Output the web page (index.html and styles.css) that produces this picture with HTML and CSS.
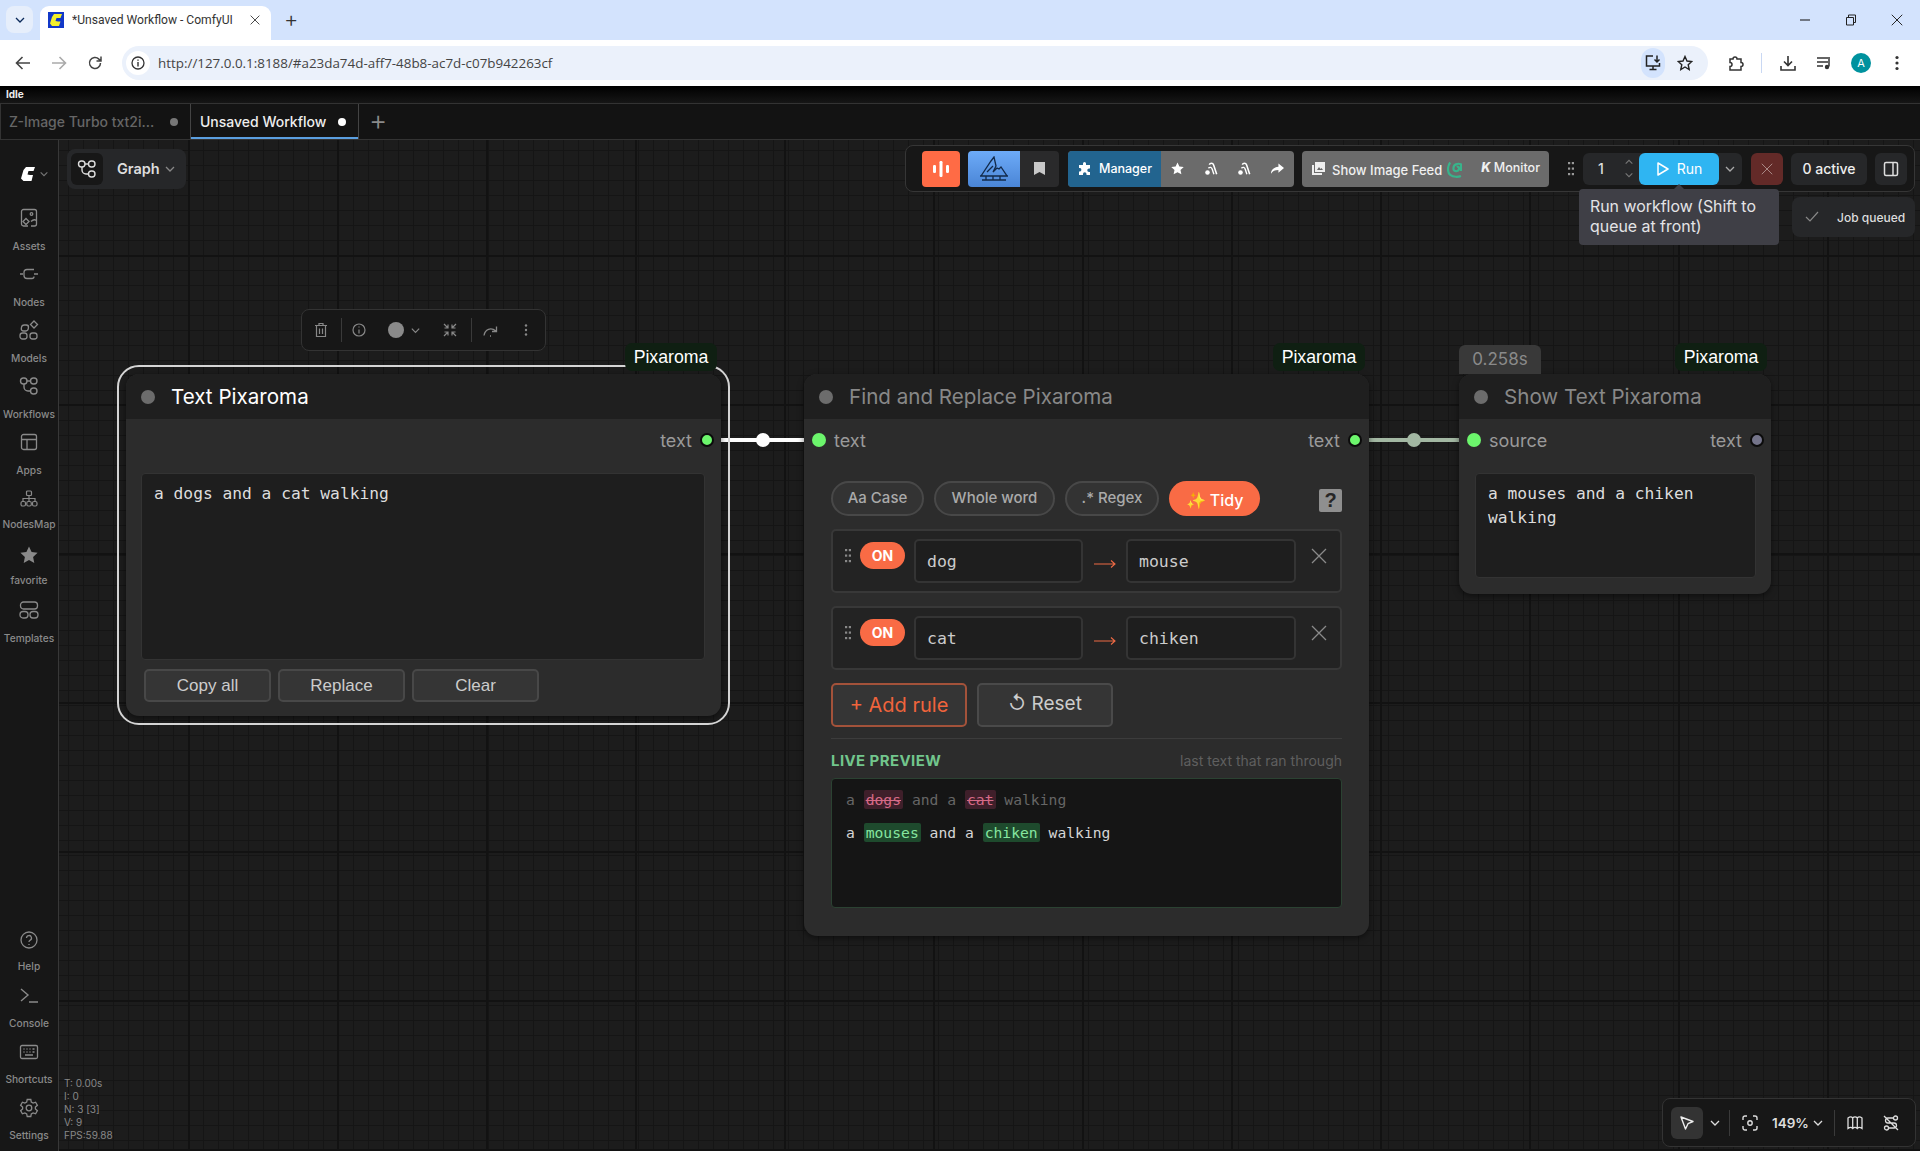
FILE: index.html
```html
<!DOCTYPE html>
<html lang="en">
<head>
  <meta charset="UTF-8">
  <title>*Unsaved Workflow - ComfyUI</title>
  <link rel="stylesheet" href="styles.css">
</head>
<body>

  <svg class="defs" width="0" height="0">
    <symbol id="chev" viewBox="0 0 12 12"><path d="M2 4l4 4 4-4" fill="none" stroke="currentColor" stroke-width="1.3"/></symbol>
    <symbol id="cross" viewBox="0 0 16 16"><path d="M1 1l14 14M15 1L1 15" fill="none" stroke="currentColor" stroke-width="1.3"/></symbol>
    <symbol id="grip" viewBox="0 0 6 14"><g fill="currentColor"><rect x="0" y="0" width="2.2" height="2.2"/><rect x="3.8" y="0" width="2.2" height="2.2"/><rect x="0" y="5.5" width="2.2" height="2.2"/><rect x="3.8" y="5.5" width="2.2" height="2.2"/><rect x="0" y="11" width="2.2" height="2.2"/><rect x="3.8" y="11" width="2.2" height="2.2"/></g></symbol>
    <symbol id="comfy" viewBox="0 0 16 16"><path d="M6 1h9l-1.5 4H8.5L7.5 8.5 10 9h3l-1.5 6H3.5L1 12.5 3.5 4z" fill="currentColor"/></symbol>
    <symbol id="flow" viewBox="0 0 20 20"><g fill="none" stroke="currentColor" stroke-width="1.4"><rect x="1.5" y="2" width="6.5" height="6" rx="3"/><rect x="11.5" y="2" width="6.5" height="6" rx="3"/><rect x="11.5" y="12" width="6.5" height="6" rx="3"/><path d="M5 8v3a4 4 0 0 0 4 4h2.500"/><path d="M8 5h3.500"/></g></symbol>
    <symbol id="vac" viewBox="0 0 16 16"><g fill="none" stroke="#fff"><path d="M6 3c1-2 4-2.500 5 .5l3.500 10.500" stroke-width="1.800"/><path d="M5 7c2-1.500 3.500-1 4.300 1l2 6" stroke-width="1.600"/></g><circle cx="4" cy="12" r="2.600" fill="#fff"/></symbol>
  </svg>

  <!-- Browser chrome -->
  <div class="tabstrip">
    <div class="tab-search"><svg width="12" height="12"><use href="#chev"/></svg></div>
    <div class="chrome-tab">
      <svg class="favicon" width="16" height="16" viewBox="0 0 16 16"><rect width="16" height="16" fill="#1238c8"/><path d="M6 2h8l-1.500 4H8.500L7.500 9 10 9.500h2.500L11 14H4L2 11.500 4 5z" fill="#f3f02c"/></svg>
      <span class="chrome-tab-title">*Unsaved Workflow - ComfyUI</span>
      <svg class="chrome-tab-close" width="10" height="10"><use href="#cross"/></svg>
    </div>
    <span class="new-tab">+</span>
    <div class="window-ctrls">
      <svg width="12" height="12" viewBox="0 0 12 12"><path d="M1 6h10" stroke="#222" stroke-width="1.100"/></svg>
      <svg width="12" height="12" viewBox="0 0 12 12"><path d="M1.500 3.500h7v7.500h-7zM3.500 3.500V1h7v7.500H8.500" fill="none" stroke="#222"/></svg>
      <svg width="12" height="12"><use href="#cross"/></svg>
    </div>
  </div>
  <div class="urlbar-row">
    <svg width="16" height="16" viewBox="0 0 16 16"><path d="M15 8H2M7.500 2L1.500 8l6 6" fill="none" stroke="#444" stroke-width="1.600"/></svg>
    <svg width="16" height="16" viewBox="0 0 16 16"><path d="M1 8h13M8.500 2l6 6-6 6" fill="none" stroke="#aaa" stroke-width="1.600"/></svg>
    <svg width="16" height="16" viewBox="0 0 16 16"><path d="M13.500 8a5.500 5.500 0 1 1-1.600-3.900L14 6M14 1.500V6H9.500" fill="none" stroke="#444" stroke-width="1.500"/></svg>
    <div class="address">
      <span class="address-info"><svg width="14" height="14" viewBox="0 0 14 14"><circle cx="7" cy="7" r="6" fill="none" stroke="#333" stroke-width="1.300"/><path d="M7 6v4.500M7 3.500v1.300" stroke="#333" stroke-width="1.400"/></svg></span>
      <span class="address-url">http://127.0.0.1:8188/#a23da74d-aff7-48b8-ac7d-c07b942263cf</span>
      <span class="address-install"><svg width="18" height="18" viewBox="0 0 18 18"><path d="M9 2H2.500v10h13V9M5.500 15.500h7M9 12v3.500M13 1.500v6M10.500 5.500l2.500 2.500 2.500-2.500" fill="none" stroke="#222" stroke-width="1.500"/></svg></span>
      <svg class="address-star" width="16" height="16" viewBox="0 0 16 16"><path d="M8 1.500l2 4.500 4.800.5-3.600 3.200 1 4.800L8 12l-4.200 2.500 1-4.800L1.200 6.500 6 6z" fill="none" stroke="#222" stroke-width="1.400"/></svg>
    </div>
    <div class="browser-actions">
      <svg width="17" height="17" viewBox="0 0 17 17"><path d="M3 4h3a2 2 0 0 1 4 0h4v3.500a2 2 0 0 1 0 4V15H3v-3.500a2 2 0 0 0 0-4z" fill="none" stroke="#333" stroke-width="1.500"/></svg>
      <span class="browser-sep"></span>
      <svg width="18" height="18" viewBox="0 0 18 18"><path d="M9 2v9M5 7.500l4 4 4-4M2 12v4h14v-4" fill="none" stroke="#333" stroke-width="1.600"/></svg>
      <svg class="media-icon" width="18" height="18" viewBox="0 0 18 18"><path d="M1 4h11M1 8h11M1 12h6" stroke="#333" stroke-width="1.500"/><path d="M13 3v9.500" stroke="#333" stroke-width="1.500"/><circle cx="11" cy="13" r="2.200" fill="#333"/></svg>
      <span class="avatar">A</span>
      <svg class="browser-menu" width="4" height="16" viewBox="0 0 4 16"><g fill="#333"><circle cx="2" cy="2.500" r="1.600"/><circle cx="2" cy="8" r="1.600"/><circle cx="2" cy="13.500" r="1.600"/></g></svg>
    </div>
  </div>

  <!-- ComfyUI top -->
  <div class="status-bar">Idle</div>
  <div class="wf-tabs">
    <div class="wf-tab"><span class="wf-tab-name">Z-Image Turbo txt2i...</span><span class="wf-dot"></span></div>
    <div class="wf-tab active"><span class="wf-tab-name">Unsaved Workflow</span><span class="wf-dot"></span></div>
    <span class="wf-add">+</span>
  </div>

  <div class="main">
    <!-- Sidebar -->
    <aside class="sidebar">
      <div class="logo-row">
        <svg width="16" height="16"><use href="#comfy"/></svg>
        <svg class="logo-chev" width="10" height="10"><use href="#chev"/></svg>
      </div>
      <div class="side-item">
        <svg width="20" height="20" viewBox="0 0 20 20"><g fill="none" stroke="currentColor" stroke-width="1.300"><path d="M9 18H4.500A2 2 0 0 1 2.500 16V3.500a2 2 0 0 1 2-2h11a2 2 0 0 1 2 2V16a2 2 0 0 1-2 2H12"/><circle cx="12.500" cy="6" r="1.300"/><path d="M7 10.500l3 3-3 3-3-3z"/><path d="M12 13.500c2-2 3.500-2.500 5.500-1"/></g></svg>
        <span>Assets</span>
      </div>
      <div class="side-item">
        <svg width="20" height="20" viewBox="0 0 20 20"><g fill="none" stroke="currentColor" stroke-width="1.300"><path d="M1 10h3M15 10h4"/><path d="M15 5.500H8a3 3 0 0 0-3 3v3a3 3 0 0 0 3 3h5a2 2 0 0 0 2-2"/></g></svg>
        <span>Nodes</span>
      </div>
      <div class="side-item">
        <svg width="20" height="20" viewBox="0 0 20 20"><g fill="none" stroke="currentColor" stroke-width="1.300"><rect x="1.500" y="5" width="7" height="6" rx="2.500" transform="skewX(-8) translate(2 0)"/><rect x="1" y="13" width="7" height="6" rx="2.500"/><rect x="11" y="13" width="7" height="6" rx="2.500"/><path d="M15 1l3.500 3.500L15 8l-3.500-3.500z"/></g></svg>
        <span>Models</span>
      </div>
      <div class="side-item">
        <svg width="20" height="20"><use href="#flow"/></svg>
        <span>Workflows</span>
      </div>
      <div class="side-item">
        <svg width="20" height="20" viewBox="0 0 20 20"><g fill="none" stroke="currentColor" stroke-width="1.300"><rect x="2.500" y="2.500" width="15" height="15" rx="2"/><path d="M2.500 7.500h15M8 7.500v10"/></g></svg>
        <span>Apps</span>
      </div>
      <div class="side-item tight">
        <svg width="20" height="20" viewBox="0 0 20 20"><g fill="none" stroke="currentColor" stroke-width="1.200"><rect x="7.500" y="2" width="5" height="4.500" rx="1"/><rect x="2" y="12.500" width="4.500" height="4.500" rx="1.500"/><rect x="7.800" y="12.500" width="4.500" height="4.500" rx="1.500"/><rect x="13.500" y="12.500" width="4.500" height="4.500" rx="1.500"/><path d="M10 6.500v6M4 12.500V9.500h12v3"/></g></svg>
        <span>NodesMap</span>
      </div>
      <div class="side-item tight">
        <svg width="20" height="20" viewBox="0 0 20 20"><path d="M10 1.500l2.600 5.600 6 .7-4.500 4.100 1.200 6L10 15l-5.300 2.900 1.200-6L1.400 7.800l6-.7z" fill="currentColor"/></svg>
        <span>favorite</span>
      </div>
      <div class="side-item">
        <svg width="20" height="20" viewBox="0 0 20 20"><g fill="none" stroke="currentColor" stroke-width="1.300"><rect x="1.500" y="2" width="17" height="7" rx="3"/><rect x="1" y="11.500" width="8" height="6.500" rx="3"/><rect x="11" y="11.500" width="8" height="6.500" rx="3"/></g></svg>
        <span>Templates</span>
      </div>

      <div class="side-bottom">
        <div class="side-item">
          <svg width="20" height="20" viewBox="0 0 20 20"><g fill="none" stroke="currentColor" stroke-width="1.300"><circle cx="10" cy="10" r="8"/><path d="M7.500 8a2.500 2.500 0 1 1 3.500 2.300c-.7.400-1 .8-1 1.700M10 14v1"/></g></svg>
          <span>Help</span>
        </div>
        <div class="side-item">
          <svg width="20" height="20" viewBox="0 0 20 20"><path d="M2 3l7 6-7 6M10 16h9" fill="none" stroke="currentColor" stroke-width="1.400"/></svg>
          <span>Console</span>
        </div>
        <div class="side-item">
          <svg width="20" height="20" viewBox="0 0 20 20"><g fill="none" stroke="currentColor" stroke-width="1.300"><rect x="1.500" y="3.500" width="17" height="13" rx="1.500"/><path d="M4.500 7h1M7.500 7h1M10.500 7h1M13.500 7h2M4.500 10h1M7.500 10h1M10.500 10h1M13.500 10h2M6 13h8"/></g></svg>
          <span>Shortcuts</span>
        </div>
        <div class="side-item">
          <svg width="20" height="20" viewBox="0 0 20 20"><g fill="none" stroke="currentColor" stroke-width="1.300"><path d="M8.200 1.500h3.600l.5 2.600 1.800 1 2.500-.9 1.800 3.100-2 1.700v2l2 1.700-1.800 3.100-2.500-.9-1.800 1-.5 2.600H8.200l-.5-2.600-1.800-1-2.500.9-1.800-3.100 2-1.700V9L1.600 7.300l1.800-3.100 2.500.9 1.800-1z"/><circle cx="10" cy="10" r="2.800"/></g></svg>
          <span>Settings</span>
        </div>
      </div>
    </aside>

    <!-- Canvas -->
    <div class="canvas">
      <svg class="links" width="1861" height="1011">
        <path d="M662 300h91" stroke="#fff" stroke-width="4"/>
        <circle cx="704" cy="300" r="7" fill="#fff"/>
        <path d="M1310 300h90" stroke="#a3b8a3" stroke-width="4"/>
        <circle cx="1355" cy="300" r="7" fill="#a3b8a3"/>
      </svg>

      <div class="graph-pill">
        <span class="graph-icon"><svg width="20" height="20"><use href="#flow"/></svg></span>
        <span class="graph-label">Graph</span>
        <svg width="12" height="12"><use href="#chev"/></svg>
      </div>

      <!-- Top action bar -->
      <div class="actionbar">
        <span class="tb-orange"><svg width="18" height="16" viewBox="0 0 18 16"><g fill="#fff"><rect x="1" y="4" width="3" height="8" rx="1.200"/><rect x="7.500" y="0" width="3" height="16" rx="1.200"/><rect x="14" y="4" width="3" height="8" rx="1.200"/></g></svg></span>
        <div class="tb-pair">
          <span class="tb-blue"><svg width="28" height="26" viewBox="0 0 28 26"><g fill="none" stroke="#122a4a" stroke-width="1.300"><path d="M1 20L11 5l3-4 2 9-3 6 4-4 2 1 2-2 6 9zM0 20h28M2 24h24M6 20v4M13 20v4M20 20v4M7 16l6-6"/></g></svg></span>
          <span class="tb-dark"><svg width="11" height="13" viewBox="0 0 11 13"><path d="M0 0h11v13L5.500 10 0 13z" fill="#c8c8c8"/></svg></span>
        </div>
        <div class="tb-manager">
          <span class="mgr-blue">
            <svg width="14" height="14" viewBox="0 0 14 14"><path d="M5 1.500a1.500 1.500 0 0 1 3 0V3h4v3.500h-1a1.700 1.700 0 0 0 0 3.500h1V13H8.500v-1a1.700 1.700 0 0 0-3.500 0v1H1V9.500h1a1.800 1.800 0 0 0 0-3.500H1V3h4z" fill="#fff"/></svg>
            Manager
          </span>
          <span class="mgr-icons">
            <svg width="13" height="13" viewBox="0 0 16 16"><path d="M8 .5l2.300 5 5.400.6-4 3.700 1.100 5.400L8 12.500l-4.800 2.700 1.100-5.400-4-3.700 5.400-.6z" fill="#fff"/></svg>
            <svg width="14" height="14"><use href="#vac"/></svg>
            <svg width="14" height="14"><use href="#vac"/></svg>
            <svg width="13" height="12" viewBox="0 0 14 12"><path d="M8 0l6 5-6 5V7C4 7 2 8 0 11c0-4 3-7 8-7.500z" fill="#fff"/></svg>
          </span>
        </div>
        <div class="tb-feed">
          <svg class="feed-icon" width="13" height="13" viewBox="0 0 13 13"><path d="M3 0h10v10H3zM0 3h2v8h8v2H0z" fill="#eee"/><path d="M5 8l2-3 1.500 2 1-1 1.500 2z" fill="#666"/></svg>
          <span class="feed-label">Show Image Feed</span>
          <svg class="feed-mantis" width="15" height="17" viewBox="0 0 14 15"><path d="M3 1C.5 4 0 10 3 12.500c3 2.500 8 2 10 1M13 2.500c-3-1-7 0-7 4 0 3 4 3.500 5 1 .8-2-1-3-2-2.500M13 2v7" fill="none" stroke="#38b48b" stroke-width="2"/></svg>
          <span class="feed-monitor"><b>K</b> Monitor</span>
        </div>
        <svg class="tb-grip" width="8" height="14"><use href="#grip"/></svg>
        <div class="run-group">
          <span class="run-count">1</span>
          <span class="run-steps">
            <svg width="10" height="10" viewBox="0 0 12 12"><path d="M2 8l4-4 4 4" fill="none" stroke="#777" stroke-width="1.300"/></svg>
            <svg width="10" height="10"><use href="#chev"/></svg>
          </span>
          <span class="run-btn">
            <svg width="14" height="16" viewBox="0 0 14 16"><path d="M2 2l10 6-10 6z" fill="none" stroke="#fff" stroke-width="1.500" stroke-linejoin="round"/></svg>
            Run
          </span>
          <svg class="run-chev" width="12" height="12"><use href="#chev"/></svg>
        </div>
        <span class="stop-btn"><svg width="12" height="12"><use href="#cross"/></svg></span>
        <span class="active-count">0 active</span>
        <span class="panel-btn"><svg width="16" height="16" viewBox="0 0 16 16"><g fill="none" stroke="#ddd" stroke-width="1.500"><rect x="1.500" y="1.500" width="13" height="13" rx="1.500"/><path d="M10 1.500v13"/></g></svg></span>
      </div>

      <div class="tooltip">Run workflow (Shift to queue at front)</div>
      <div class="toast">
        <svg width="14" height="12" viewBox="0 0 14 12"><path d="M1 6l4 4 8-9" fill="none" stroke="#888" stroke-width="1.200"/></svg>
        <span>Job queued</span>
      </div>

      <!-- Selection toolbox -->
      <div class="selection-box">
        <svg class="sb-trash" width="14" height="16" viewBox="0 0 14 16"><g fill="none" stroke="#888" stroke-width="1.200"><path d="M1 3.500h12M5 3.500V1.500h4v2M2.500 3.500v11h9v-11M5.500 6.500v5.500M8.500 6.500v5.500"/></g></svg>
        <span class="sb-sep"></span>
        <svg class="sb-info" width="14" height="14" viewBox="0 0 14 14"><g fill="none" stroke="#888" stroke-width="1.200"><circle cx="7" cy="7" r="6"/><path d="M7 6.500v4M7 3.500v1"/></g></svg>
        <span class="sb-color"></span>
        <svg class="sb-chev" width="11" height="11"><use href="#chev"/></svg>
        <svg class="sb-collapse" width="14" height="14" viewBox="0 0 14 14"><path d="M1 1l4 4M5 1.500V5H1.500M13 1L9 5M9 1.500V5h3.500M1 13l4-4M5 12.500V9H1.500M13 13L9 9M9 12.500V9h3.500" fill="none" stroke="#888" stroke-width="1.200"/></svg>
        <span class="sb-sep sb-sep2"></span>
        <svg class="sb-redo" width="15" height="13" viewBox="0 0 15 13"><path d="M1 11.500C2 5 8 3 13 7M13.500 2.500V7.500H9M7 12h1" fill="none" stroke="#888" stroke-width="1.300"/></svg>
        <svg class="sb-dots" width="4" height="12" viewBox="0 0 4 12"><g fill="#888"><circle cx="2" cy="1.500" r="1.200"/><circle cx="2" cy="6" r="1.200"/><circle cx="2" cy="10.500" r="1.200"/></g></svg>
      </div>

      <!-- Text node -->
      <div class="node node-text">
        <div class="node-outline"></div>
        <span class="node-badge">Pixaroma</span>
        <div class="node-title selected"><span class="title-dot"></span>Text Pixaroma</div>
        <div class="slots">
          <span class="slot-side"></span>
          <span class="slot-side"><span class="slot-label">text</span><span class="slot green"></span></span>
        </div>
        <div class="textarea textarea-big">a dogs and a cat walking</div>
        <div class="text-btns">
          <span class="text-btn">Copy all</span>
          <span class="text-btn">Replace</span>
          <span class="text-btn">Clear</span>
        </div>
      </div>

      <!-- Find and replace node -->
      <div class="node node-find">
        <span class="node-badge">Pixaroma</span>
        <div class="node-title"><span class="title-dot"></span>Find and Replace Pixaroma</div>
        <div class="slots">
          <span class="slot-side"><span class="slot green flat"></span><span class="slot-label">text</span></span>
          <span class="slot-side"><span class="slot-label">text</span><span class="slot green"></span></span>
        </div>
        <div class="find-body">
          <div class="chips">
            <span class="chip chip-case">Aa Case</span>
            <span class="chip chip-word">Whole word</span>
            <span class="chip chip-regex">.* Regex</span>
            <span class="chip chip-tidy">✨ Tidy</span>
            <span class="help-box">?</span>
          </div>

          <div class="rule">
            <svg class="rule-grip" width="6" height="14"><use href="#grip"/></svg>
            <span class="rule-on">ON</span>
            <span class="rule-input">dog</span>
            <span class="rule-arrow"><svg width="22" height="8" viewBox="0 0 22 8"><path d="M0 4h21M17 .5L21 4l-4 3.500" fill="none" stroke="#ee6a44" stroke-width="1.100"/></svg></span>
            <span class="rule-input">mouse</span>
            <span class="rule-x"><svg width="16" height="16"><use href="#cross"/></svg></span>
          </div>
          <div class="rule">
            <svg class="rule-grip" width="6" height="14"><use href="#grip"/></svg>
            <span class="rule-on">ON</span>
            <span class="rule-input">cat</span>
            <span class="rule-arrow"><svg width="22" height="8" viewBox="0 0 22 8"><path d="M0 4h21M17 .5L21 4l-4 3.500" fill="none" stroke="#ee6a44" stroke-width="1.100"/></svg></span>
            <span class="rule-input">chiken</span>
            <span class="rule-x"><svg width="16" height="16"><use href="#cross"/></svg></span>
          </div>

          <div class="rule-btns">
            <span class="rule-btn add">+ Add rule</span>
            <span class="rule-btn reset">↺ Reset</span>
          </div>
          <div class="find-divider"></div>
          <div class="preview-head">
            <span class="preview-title">LIVE PREVIEW</span>
            <span class="preview-note">last text that ran through</span>
          </div>
          <div class="preview">
            <div class="preview-line old">a <mark class="del">dogs</mark> and a <mark class="del">cat</mark> walking</div>
            <div class="preview-line new">a <mark class="ins">mouses</mark> and a <mark class="ins">chiken</mark> walking</div>
          </div>
        </div>
      </div>

      <!-- Show text node -->
      <div class="node node-show">
        <span class="node-time">0.258s</span>
        <span class="node-badge">Pixaroma</span>
        <div class="node-title"><span class="title-dot"></span>Show Text Pixaroma</div>
        <div class="slots">
          <span class="slot-side"><span class="slot green flat"></span><span class="slot-label">source</span></span>
          <span class="slot-side"><span class="slot-label">text</span><span class="slot grey"></span></span>
        </div>
        <div class="textarea textarea-small">a mouses and a chiken walking</div>
      </div>

      <!-- Stats -->
      <div class="stats">
        <div>T: 0.00s</div>
        <div>I: 0</div>
        <div>N: 3 [3]</div>
        <div>V: 9</div>
        <div>FPS:59.88</div>
      </div>

      <!-- Bottom canvas controls -->
      <div class="zoom-bar">
        <span class="zb-pointer"><svg width="16" height="16" viewBox="0 0 16 16"><path d="M2 2l12 4.500-5 2.200L6.500 14z" fill="none" stroke="#eee" stroke-width="1.400" stroke-linejoin="round"/></svg></span>
        <svg class="zb-chev" width="12" height="12"><use href="#chev"/></svg>
        <span class="zb-sep"></span>
        <svg class="zb-fit" width="16" height="16" viewBox="0 0 16 16"><g fill="none" stroke="#ddd" stroke-width="1.400"><path d="M1 5V3a2 2 0 0 1 2-2h2M11 1h2a2 2 0 0 1 2 2v2M15 11v2a2 2 0 0 1-2 2h-2M5 15H3a2 2 0 0 1-2-2v-2"/><circle cx="8" cy="8" r="2.200"/></g></svg>
        <span class="zb-pct">149%</span>
        <svg class="zb-chev2" width="12" height="12"><use href="#chev"/></svg>
        <span class="zb-sep zb-sep2"></span>
        <svg class="zb-map" width="16" height="16" viewBox="0 0 16 16"><path d="M1 3c2-1.500 3.500-1.500 4.700 0 1.400-1.500 3.200-1.500 4.600 0 1.200-1.500 2.700-1.500 4.700 0v10.500c-2-1.500-3.500-1.500-4.700 0-1.400-1.500-3.200-1.500-4.600 0-1.200-1.500-2.700-1.500-4.700 0zM5.700 3v10.500M10.300 3v10.500" fill="none" stroke="#ddd" stroke-width="1.300"/></svg>
        <svg class="zb-links" width="16" height="16" viewBox="0 0 16 16"><g fill="none" stroke="#ddd" stroke-width="1.300"><circle cx="12.500" cy="3" r="2"/><circle cx="3.500" cy="13" r="2"/><path d="M10.500 3H5a2.500 2.500 0 0 0 0 5h6a2.500 2.500 0 0 1 0 5H5.500M1 1l14 14"/></g></svg>
      </div>
    </div>
  </div>

</body>
</html>
```

FILE: styles.css
```css
* {
  box-sizing: border-box;
}

body {
  margin: 0;
  width: 1920px;
  height: 1151px;
  overflow: hidden;
  background-color: #1b1b1b;
  font-family: Inter, "Noto Sans", sans-serif;
}

.defs {
  position: absolute;
}

/* Browser chrome */
.tabstrip {
  height: 40px;
  background-color: #d3e3fd;
  display: flex;
  align-items: flex-end;
  position: relative;
}

.tab-search {
  width: 27px;
  height: 27px;
  margin: 0 7px 7px 6px;
  border-radius: 8px;
  background-color: #e6eefb;
  display: flex;
  align-items: center;
  justify-content: center;
  color: #0b2a5a;
}

.chrome-tab {
  width: 231px;
  height: 34px;
  background-color: #fff;
  border-radius: 9px 9px 0 0;
  display: flex;
  align-items: center;
  padding: 0 11px 6px 8px;
}

.chrome-tab-title {
  margin-left: 8px;
  font-family: Roboto, sans-serif;
  font-size: 12.100px;
  color: #333;
  flex: 1;
  white-space: nowrap;
  overflow: hidden;
}

.chrome-tab-close {
  color: #222;
}

.new-tab {
  margin-left: 13px;
  width: 16px;
  font-size: 22px;
  font-weight: 300;
  line-height: 38px;
  color: #333;
  align-self: stretch;
}

.window-ctrls {
  position: absolute;
  top: 14px;
  right: 17px;
  display: flex;
  gap: 34px;
  color: #222;
}

.urlbar-row {
  height: 46px;
  background-color: #fff;
  display: flex;
  align-items: center;
  padding-left: 15px;
  gap: 20px;
}

.address {
  margin-left: -1px;
  width: 1586px;
  height: 34px;
  border-radius: 17px;
  background-color: #ebf1fb;
  display: flex;
  align-items: center;
  padding-left: 4px;
}

.address-info {
  width: 24px;
  height: 24px;
  border-radius: 50%;
  background-color: #fff;
  display: flex;
  align-items: center;
  justify-content: center;
}

.address-url {
  margin-left: 8px;
  font-family: "Open Sans", sans-serif;
  font-size: 13.400px;
  color: #444;
  flex: 1;
}

.address-install {
  width: 24px;
  height: 30px;
  border-radius: 12px;
  background-color: #d3e3fd;
  display: flex;
  align-items: center;
  justify-content: center;
}

.address-star {
  margin: 0 15px 0 12px;
}

.browser-actions {
  display: flex;
  align-items: center;
  margin-left: -1px;
  gap: 17px;
}

.media-icon {
  margin-left: 2px;
}

.browser-menu {
  margin-left: 7px;
}

.browser-sep {
  width: 1px;
  height: 20px;
  background-color: #c9d8f3;
}

.avatar {
  width: 20px;
  height: 20px;
  border-radius: 50%;
  background-color: #00929e;
  color: #fff;
  font-size: 11px;
  display: flex;
  align-items: center;
  justify-content: center;
}

/* Comfy header */
.status-bar {
  height: 17px;
  background: linear-gradient(#000, #161616);
  color: #eee;
  font-size: 10px;
  font-weight: 700;
  line-height: 17px;
  padding-left: 6px;
}

.wf-tabs {
  height: 37px;
  background-color: #131313;
  border-top: 1px solid #333;
  border-bottom: 1px solid #333;
  display: flex;
  align-items: stretch;
}

.wf-tab {
  display: flex;
  align-items: center;
  border-right: 1px solid #444;
  border-left: 1px solid #333;
  width: 191px;
  padding-left: 8px;
  font-size: 14px;
  font-weight: 500;
  color: #666;
  white-space: nowrap;
}

.wf-tab.active {
  width: 168px;
  padding-left: 9px;
  color: #eee;
  font-weight: 500;
  border-left: none;
  background-color: #141414;
  box-shadow: inset 0 -2px 0 #5b9fe0;
}

.wf-dot {
  margin-left: auto;
  margin-right: 12px;
  width: 8px;
  height: 8px;
  border-radius: 50%;
  background-color: #777;
}

.wf-tab.active .wf-dot {
  background-color: #fff;
  margin-right: 12px;
}

.wf-add {
  margin-left: 10px;
  font-size: 28px;
  font-weight: 300;
  color: #8a8a8a;
  line-height: 33px;
}

.main {
  display: flex;
  height: 1011px;
}

/* Sidebar */
.sidebar {
  width: 59px;
  flex-shrink: 0;
  background-color: #171717;
  border-right: 1px solid #383838;
  display: flex;
  flex-direction: column;
  align-items: center;
  overflow: hidden;
  color: #8a8a8a;
}

.logo-row {
  height: 68px;
  flex-shrink: 0;
  width: 100%;
  display: flex;
  align-items: center;
  padding-left: 20px;
  gap: 3px;
  color: #fff;
}

.logo-chev {
  color: #777;
}

.side-item {
  height: 56px;
  flex-shrink: 0;
  width: 100%;
  display: flex;
  flex-direction: column;
  align-items: center;
  font-size: 10.200px;
  font-weight: 500;
  white-space: nowrap;
}

.side-item span {
  margin-top: 11px;
  line-height: 14px;
}

.side-item.tight svg {
  margin-top: 1px;
}

.side-item.tight span {
  margin-top: 8px;
}

.side-bottom {
  margin-top: auto;
  margin-bottom: -3px;
  width: 100%;
}

.side-bottom .side-item span {
  margin-top: 10px;
}

.side-bottom .side-item:first-child span {
  margin-top: 9px;
}

/* Canvas */
.canvas {
  position: relative;
  flex: 1;
  overflow: hidden;
  background-color: #1c1c1c;
  background-image:
    linear-gradient(#121212 2px, transparent 2px),
    linear-gradient(90deg, #121212 2px, transparent 2px),
    linear-gradient(#151515 1px, transparent 1px),
    linear-gradient(90deg, #151515 1px, transparent 1px);
  background-size: 149px 149px, 149px 149px, 15px 15px, 15px 15px;
  background-position: 0 115px, 129px 0, 0 10px, 9px 0;
}

.links {
  position: absolute;
  left: 0;
  top: 0;
}

.graph-pill {
  position: absolute;
  left: 8px;
  top: 9px;
  width: 119px;
  height: 40px;
  border-radius: 8px;
  background-color: #262729;
  display: flex;
  align-items: center;
  padding-left: 4px;
  color: #ddd;
}

.graph-pill > svg {
  color: #888;
  margin-left: 4px;
}

.graph-icon {
  width: 32px;
  height: 32px;
  border-radius: 6px;
  background-color: #171717;
  display: flex;
  align-items: center;
  justify-content: center;
}

.graph-label {
  margin-left: 14px;
  padding-bottom: 2px;
  font-size: 14.500px;
  font-weight: 600;
}

/* Action bar */
.actionbar {
  position: absolute;
  left: 846px;
  top: 5px;
  width: 1010px;
  height: 47px;
  border: 1px solid #363636;
  border-radius: 8px;
  background-color: #171717;
  display: flex;
  align-items: center;
  padding-left: 16px;
}

.tb-orange {
  width: 38px;
  height: 36px;
  border-radius: 4px;
  background-color: #ff6b45;
  display: flex;
  align-items: center;
  justify-content: center;
}

.tb-pair {
  margin-left: 8px;
  display: flex;
  height: 36px;
}

.tb-blue {
  width: 52px;
  background: linear-gradient(#6dabf8, #4a85d6);
  border-radius: 4px 0 0 4px;
  display: flex;
  align-items: center;
  justify-content: center;
}

.tb-dark {
  width: 39px;
  background-color: #2a2a2b;
  border-radius: 0 4px 4px 0;
  display: flex;
  align-items: center;
  justify-content: center;
}

.tb-manager {
  margin-left: 9px;
  display: flex;
  height: 36px;
  width: 226px;
  border-radius: 4px;
  overflow: hidden;
  background-color: #6b6b6b;
  color: #fff;
}

.mgr-blue {
  width: 93px;
  background-color: #22648f;
  display: flex;
  align-items: center;
  gap: 7px;
  padding-left: 10px;
  font-size: 12.500px;
  font-weight: 500;
}

.mgr-icons {
  flex: 1;
  display: flex;
  align-items: center;
  justify-content: space-between;
  padding: 0 10px;
  color: #fff;
}

.tb-feed {
  margin-left: 8px;
  width: 247px;
  height: 36px;
  border-radius: 4px;
  background-color: #6b6b6b;
  color: #f0f0f0;
  display: flex;
  align-items: center;
  padding-left: 10px;
  font-size: 13px;
  font-weight: 500;
}

.feed-icon {
  margin-right: 7px;
}

.feed-label {
  position: relative;
  top: 1px;
}

.feed-mantis {
  margin-left: 5px;
  position: relative;
  top: 1px;
}

.feed-monitor {
  margin-left: auto;
  margin-right: 9px;
  font-size: 12.500px;
  position: relative;
  top: -1px;
}

.feed-monitor b {
  font-style: italic;
  font-weight: 800;
}

.tb-grip {
  margin-left: 18px;
  color: #999;
}

.run-group {
  margin-left: 8px;
  width: 159px;
  height: 32px;
  border-radius: 6px;
  background-color: #262729;
  display: flex;
  align-items: center;
}

.run-count {
  width: 36px;
  text-align: center;
  color: #ddd;
  font-size: 14px;
  font-weight: 500;
}

.run-steps {
  width: 20px;
  display: flex;
  flex-direction: column;
  align-items: center;
  gap: 3px;
  color: #777;
}

.run-btn {
  width: 80px;
  height: 32px;
  border-radius: 6px;
  background-color: #2fb5f2;
  color: #fff;
  display: flex;
  align-items: center;
  justify-content: center;
  gap: 7px;
  font-size: 14px;
}

.run-chev {
  margin-left: 5px;
  color: #aaa;
}

.stop-btn {
  margin-left: 9px;
  width: 32px;
  height: 32px;
  border-radius: 6px;
  background-color: #632a28;
  color: #aa8a88;
  display: flex;
  align-items: center;
  justify-content: center;
}

.active-count {
  margin-left: 8px;
  width: 76px;
  height: 32px;
  border-radius: 6px;
  background-color: #262729;
  color: #eee;
  font-size: 14px;
  font-weight: 500;
  display: flex;
  align-items: center;
  justify-content: center;
}

.panel-btn {
  margin-left: 8px;
  width: 32px;
  height: 32px;
  border-radius: 6px;
  background-color: #262729;
  display: flex;
  align-items: center;
  justify-content: center;
}

.tooltip {
  position: absolute;
  left: 1520px;
  top: 49px;
  width: 200px;
  height: 56px;
  padding: 8px 11px;
  border-radius: 4px;
  background-color: #3f3f46;
  color: #e4e4e7;
  font-size: 15.900px;
  line-height: 20px;
}

.tooltip::before {
  content: "";
  position: absolute;
  left: 95px;
  top: -5px;
  border: 5px solid transparent;
  border-top: none;
  border-bottom-color: #3f3f46;
}

.toast {
  position: absolute;
  left: 1733px;
  top: 57px;
  width: 123px;
  height: 40px;
  border-radius: 8px;
  background-color: #262729;
  color: #ddd;
  display: flex;
  align-items: center;
  padding-left: 13px;
  gap: 18px;
  font-size: 12px;
  font-weight: 500;
}

/* Selection toolbox */
.selection-box {
  position: absolute;
  left: 242px;
  top: 169px;
  width: 245px;
  height: 42px;
  border: 1px solid #333;
  border-radius: 8px;
  background-color: #171717;
  display: flex;
  align-items: center;
  padding-left: 12px;
}

.sb-sep {
  width: 1px;
  height: 24px;
  background-color: #3a3a3a;
  margin-left: 13px;
}

.sb-info {
  margin-left: 10px;
}

.sb-color {
  margin-left: 22px;
  width: 16px;
  height: 16px;
  border-radius: 50%;
  background-color: #8a8a8a;
}

.sb-chev {
  margin-left: 6px;
  color: #888;
}

.sb-collapse {
  margin-left: 22px;
}

.sb-sep2 {
  margin-left: 14px;
}

.sb-redo {
  margin-left: 11px;
}

.sb-dots {
  margin-left: 26px;
}

/* Nodes */
.node {
  position: absolute;
  border-radius: 13px;
  background-color: #2c2c2c;
  box-shadow: 0 2px 6px rgba(0, 0, 0, 0.5);
}

.node-text {
  left: 67px;
  top: 234px;
  width: 595px;
  height: 342px;
}

.node-find {
  left: 745px;
  top: 234px;
  width: 565px;
  height: 562px;
}

.node-show {
  left: 1400px;
  top: 234px;
  width: 312px;
  height: 220px;
}

.node-outline {
  position: absolute;
  inset: -9px;
  border: 2px solid #d4d4d4;
  border-radius: 22px;
  pointer-events: none;
}

.node-badge {
  position: absolute;
  top: -31px;
  right: 4px;
  width: 92px;
  height: 28px;
  border-radius: 7px;
  background-color: #0f1f12;
  color: #fff;
  font-family: "Liberation Sans", sans-serif;
  font-size: 17.700px;
  line-height: 28px;
  text-align: center;
}

.node-time {
  position: absolute;
  left: 0;
  top: -29px;
  width: 82px;
  height: 29px;
  border-radius: 6px 6px 0 0;
  background-color: #393939;
  color: #8a8a8a;
  font-size: 17px;
  line-height: 29px;
  text-align: center;
}

.node-title {
  height: 45px;
  border-radius: 13px 13px 0 0;
  background-color: #1f1f1f;
  display: flex;
  align-items: center;
  padding-left: 15px;
  gap: 16px;
  font-size: 20.600px;
  color: #888;
}

.node-title.selected {
  color: #fff;
}

.title-dot {
  width: 14px;
  height: 14px;
  border-radius: 50%;
  background-color: #6c6c6c;
}

.slots {
  height: 42px;
  display: flex;
  align-items: center;
  justify-content: space-between;
  padding: 0 7px 0 8px;
}

.slot-side {
  display: flex;
  align-items: center;
  gap: 8px;
}

.slot-label {
  font-size: 18px;
  color: #9a9a9a;
}

.slot {
  width: 14px;
  height: 14px;
  border-radius: 50%;
  border: 2px solid #0b0b0b;
  background-color: #6cf56c;
}

.slot.flat {
  border: none;
}

.slot.grey {
  background-color: #74748a;
}

.textarea {
  background-color: #1e1e1e;
  border: 1px solid #333;
  border-radius: 4px;
  color: #ddd;
  font-family: "DejaVu Sans Mono", monospace;
  font-size: 16.250px;
  line-height: 24px;
  padding: 8px 12px;
}

.textarea-big {
  margin: 12px 16px 0 15px;
  height: 187px;
}

.textarea-small {
  margin: 12px 15px 0 16px;
  height: 105px;
}

.text-btns {
  display: flex;
  gap: 7px;
  margin: 9px 0 0 18px;
}

.text-btn {
  width: 127px;
  height: 33px;
  border: 2px solid #484848;
  border-radius: 5px;
  background-color: #353535;
  color: #ccc;
  font-family: "Liberation Sans", sans-serif;
  font-size: 17px;
  line-height: 30px;
  text-align: center;
}

/* Find and replace */
.find-body {
  padding: 20px 27px 0;
}

.chips {
  display: flex;
  gap: 10px;
}

.chip {
  height: 35px;
  border: 2px solid #484848;
  border-radius: 18px;
  background-color: #333;
  color: #aaa;
  font-size: 15px;
  font-weight: 500;
  line-height: 30px;
  text-align: center;
}

.chip-case {
  width: 93px;
}

.chip-word {
  width: 121px;
}

.chip-regex {
  width: 94px;
}

.chip-tidy {
  width: 91px;
  border: none;
  background-color: #f96b45;
  color: #fff;
  font-size: 16px;
  line-height: 38px;
}

.help-box {
  margin: 8px 0 0 auto;
  width: 23px;
  height: 23px;
  border-radius: 2px;
  background-color: #8f8f8f;
  color: #262626;
  font-family: "Liberation Sans", sans-serif;
  font-size: 20px;
  font-weight: 700;
  line-height: 23px;
  text-align: center;
}

.rule {
  margin-top: 13px;
  height: 64px;
  border: 2px solid #383838;
  border-radius: 5px;
  background-color: #232323;
  display: flex;
  align-items: flex-start;
  padding-left: 12px;
}

.rule-grip {
  margin-top: 18px;
  color: #888;
}

.rule-on {
  margin: 11px 0 0 9px;
  width: 45px;
  height: 27px;
  border-radius: 14px;
  background-color: #f96b45;
  color: #fff;
  font-size: 14px;
  font-weight: 700;
  line-height: 27px;
  text-align: center;
}

.rule-input {
  margin: 8px 0 0 9px;
  width: 169px;
  height: 44px;
  border: 2px solid #343434;
  border-radius: 5px;
  background-color: #1e1e1e;
  color: #ccc;
  font-family: "DejaVu Sans Mono", monospace;
  font-size: 16.500px;
  line-height: 42px;
  padding-left: 11px;
}

.rule-arrow {
  margin-top: 29px;
  width: 43px;
  display: flex;
  justify-content: center;
}

.rule-arrow + .rule-input {
  margin-left: 0;
  width: 170px;
}

.rule-x {
  margin-top: 17px;
  margin-left: 15px;
  color: #8a8a8a;
  display: flex;
}

.rule-btns {
  margin-top: 13px;
  display: flex;
  gap: 10px;
}

.rule-btn {
  width: 136px;
  height: 44px;
  border: 2px solid #4a4a4a;
  border-radius: 5px;
  background-color: #353535;
  color: #ccc;
  font-size: 20px;
  line-height: 38px;
  text-align: center;
}

.rule-btn.reset {
  font-size: 19px;
}

.rule-btn.add {
  border-color: #a3523a;
  color: #f0643c;
  line-height: 40px;
}

.find-divider {
  margin-top: 11px;
  height: 1px;
  background-color: #3c3c3c;
}

.preview-head {
  margin-top: 12px;
  height: 18px;
  display: flex;
  align-items: center;
  justify-content: space-between;
}

.preview-title {
  color: #72c68c;
  font-size: 15px;
  font-weight: 700;
  letter-spacing: 0.4px;
}

.preview-note {
  color: #5f5f5f;
  font-size: 14px;
}

.preview {
  margin-top: 9px;
  height: 130px;
  border: 1px solid #2b4232;
  border-radius: 4px;
  background-color: #151515;
  padding: 11px 14px;
  font-family: "DejaVu Sans Mono", monospace;
  font-size: 14.700px;
}

.preview-line {
  height: 33px;
  line-height: 20px;
}

.preview-line.old {
  color: #666;
}

.preview-line.new {
  color: #d6d6d6;
}

mark {
  padding: 1px 2px;
  border-radius: 2px;
}

mark.del {
  background-color: #3f1f2a;
  color: #d66a87;
  text-decoration: line-through;
}

mark.ins {
  background-color: #1e4a2d;
  color: #86e6a0;
}

/* Stats and zoom */
.stats {
  position: absolute;
  left: 5px;
  bottom: 9px;
  color: #888;
  font-size: 10px;
  line-height: 13px;
}

.zoom-bar {
  position: absolute;
  left: 1603px;
  top: 958px;
  width: 254px;
  height: 49px;
  border: 1px solid #333;
  border-radius: 8px;
  background-color: #171717;
  display: flex;
  align-items: center;
  padding-left: 8px;
  color: #ddd;
}

.zb-pointer {
  width: 32px;
  height: 32px;
  border-radius: 6px;
  background-color: #333;
  display: flex;
  align-items: center;
  justify-content: center;
}

.zb-chev {
  margin-left: 6px;
}

.zb-sep {
  margin-left: 8px;
  width: 1px;
  height: 26px;
  background-color: #3a3a3a;
}

.zb-sep2 {
  margin-left: 10px;
}

.zb-fit {
  margin-left: 12px;
}

.zb-pct {
  margin-left: 14px;
  font-size: 13.500px;
  font-weight: 600;
}

.zb-chev2 {
  margin-left: 3px;
}

.zb-map {
  margin-left: 12px;
}

.zb-links {
  margin-left: 20px;
}
```
